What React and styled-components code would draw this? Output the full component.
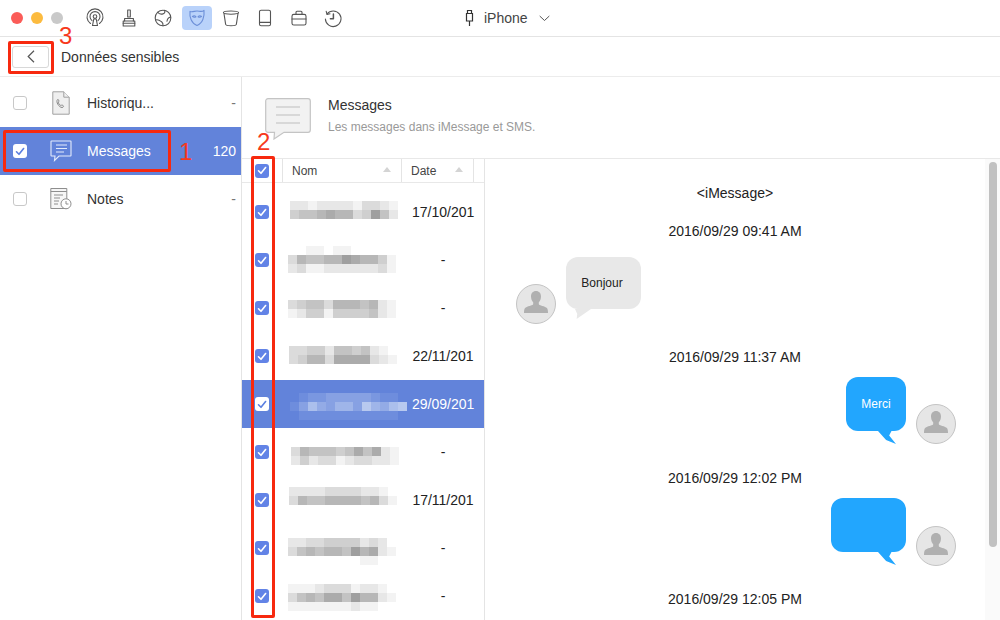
import React from "react";
import styled, { createGlobalStyle } from "styled-components";

const Global = createGlobalStyle`
  html, body { margin: 0; padding: 0; background: #fff; }
  body { font-family: "Liberation Sans", Arial, sans-serif; color: #222; }
`;

const Window = styled.div`
  position: relative;
  width: 1000px;
  height: 620px;
  overflow: hidden;
  background: #fff;
  display: flex;
  flex-direction: column;
`;

const Toolbar = styled.header`
  height: 36px;
  flex: none;
  display: flex;
  align-items: center;
  padding-left: 11px;
  border-bottom: 1px solid #e4e4e4;
`;
const Lights = styled.div`
  display: flex;
  gap: 8px;
  margin-right: 17px;
`;
const Light = styled.span`
  width: 12px;
  height: 12px;
  border-radius: 50%;
  background: ${p => p.$c};
`;
const Tools = styled.nav`
  display: flex;
  gap: 4px;
`;
const Tool = styled.div`
  width: 30px;
  height: 24px;
  border-radius: 4px;
  display: flex;
  align-items: center;
  justify-content: center;
  color: ${p => (p.$active ? "#6c8fd8" : "#555")};
  background: ${p => (p.$active ? "#b9d2fa" : "transparent")};
`;
const Device = styled.div`
  margin-left: 117px;
  display: flex;
  align-items: center;
  font-size: 14px;
  color: #444;
`;
const DeviceName = styled.span`
  margin: 0 11px 0 10px;
`;

const SubBar = styled.div`
  height: 39px;
  flex: none;
  display: flex;
  align-items: center;
  padding-left: 12px;
  border-bottom: 1px solid #ececec;
`;
const BackButton = styled.div`
  width: 35px;
  height: 20px;
  border: 1px solid #d8d8d8;
  border-radius: 3px;
  display: flex;
  align-items: center;
  justify-content: center;
  color: #555;
`;
const SubTitle = styled.div`
  margin-left: 12px;
  font-size: 14px;
  color: #333;
`;

const Body = styled.div`
  flex: 1;
  min-height: 0;
  display: flex;
`;
const Sidebar = styled.aside`
  width: 241px;
  flex: none;
  padding-top: 2px;
  border-right: 1px solid #e4e4e4;
`;
const SideRow = styled.div`
  height: 48px;
  display: grid;
  grid-template-columns: 37px 37px 1fr auto;
  align-items: center;
  padding: 0 5px 0 13px;
  background: ${p => (p.$active ? "#6283da" : "transparent")};
  color: ${p => (p.$active ? "#fff" : "#333")};
  font-size: 14px;
`;
const SideIcon = styled.div`
  display: flex;
  justify-content: center;
  width: 22px;
  color: ${p => (p.$active ? "#e4ebfb" : "#888")};
`;
const SideCount = styled.span`
  color: ${p => (p.$active ? "#fff" : "#777")};
`;
const Box = styled.span`
  width: 14px;
  height: 14px;
  box-sizing: border-box;
  border-radius: 3px;
  display: flex;
  align-items: center;
  justify-content: center;
  background: ${p => (p.$kind === "empty" || p.$kind === "white" ? "#fff" : "#6283e6")};
  border: ${p => (p.$kind === "empty" ? "1px solid #c8c8c8" : "none")};
  color: ${p => (p.$kind === "white" ? "#5b7fe0" : "#fff")};
`;

const Main = styled.main`
  flex: 1;
  min-width: 0;
  display: flex;
  flex-direction: column;
`;
const MainHead = styled.div`
  height: 82px;
  flex: none;
  box-sizing: border-box;
  padding: 19px 0 0 23px;
  display: flex;
  border-bottom: 1px solid #e8e8e8;
`;
const HeadText = styled.div`
  margin-left: 17px;
`;
const HeadTitle = styled.div`
  font-size: 14px;
  line-height: 18px;
  color: #333;
`;
const HeadSub = styled.div`
  margin-top: 6px;
  font-size: 12px;
  line-height: 15px;
  color: #999;
`;
const BigMsgSvg = styled.svg`
  display: block;
  margin-top: 2px;
`;

const Split = styled.div`
  flex: 1;
  min-height: 0;
  display: flex;
`;
const ListPane = styled.section`
  width: 243px;
  flex: none;
  box-sizing: border-box;
  border-right: 1px solid #e4e4e4;
`;
const ListHead = styled.div`
  height: 24px;
  box-sizing: border-box;
  display: grid;
  grid-template-columns: 40px 120px 72px;
  align-items: stretch;
  border-bottom: 1px solid #e8e8e8;
  margin-bottom: 5px;
  font-size: 12px;
  color: #444;
`;
const HeadCell = styled.div`
  display: flex;
  align-items: center;
  justify-content: space-between;
  padding: 0 10px 0 9px;
  border-right: 1px solid #e4e4e4;
  border-left: ${p => (p.$first ? "1px solid #e4e4e4" : "none")};
`;
const BoxCell = styled.div`
  display: flex;
  align-items: center;
  padding-left: 13px;
`;
const SortMark = styled.i`
  width: 0;
  height: 0;
  border-left: 4px solid transparent;
  border-right: 4px solid transparent;
  border-bottom: 5px solid #d4d4d4;
  margin-top: -3px;
`;
const ListRow = styled.div`
  height: 48px;
  display: grid;
  grid-template-columns: 40px 130px 62px;
  align-items: center;
  background: ${p => (p.$active ? "#6283da" : "transparent")};
  color: ${p => (p.$active ? "#fff" : "#222")};
  font-size: 14px;
`;
const DateCell = styled.div`
  text-align: center;
  white-space: nowrap;
`;
const MosaicSvg = styled.svg`
  display: block;
  filter: blur(0.7px);
`;

const Thread = styled.section`
  flex: 1;
  min-width: 0;
  display: flex;
  flex-direction: column;
  align-items: stretch;
`;
const ThreadTitle = styled.div`
  margin-top: 25px;
  line-height: 18px;
  font-size: 14px;
  text-align: center;
  color: #222;
`;
const Stamp = styled.div`
  margin-top: ${p => p.$top}px;
  line-height: 18px;
  font-size: 14px;
  text-align: center;
  color: #222;
`;
const MsgRow = styled.div`
  margin-top: ${p => p.$top}px;
  height: ${p => p.$h}px;
  display: flex;
  gap: 10px;
  justify-content: ${p => (p.$me ? "flex-end" : "flex-start")};
  padding: ${p => (p.$me ? "0 29px 0 0" : "0 0 0 31px")};
`;
const Avatar = styled.div`
  width: 40px;
  height: 40px;
  box-sizing: border-box;
  align-self: flex-end;
  border-radius: 50%;
  background: #e6e6e6;
  border: 1px solid #c4c4c4;
  display: flex;
  align-items: center;
  justify-content: center;
  overflow: hidden;
  color: #b0b0b0;
`;
const Bubble = styled.div`
  position: relative;
  box-sizing: border-box;
  width: ${p => p.$w}px;
  height: ${p => (p.$me ? 54 : 52)}px;
  border-radius: 12px;
  font-size: 12px;
  display: flex;
  align-items: center;
  justify-content: center;
  padding-right: ${p => (p.$me ? 0 : 3)}px;
  background: ${p => (p.$me ? "#22a6fe" : "#e8e8e8")};
  color: ${p => (p.$me ? "#fff" : "#222")};
  &::after {
    content: "";
    position: absolute;
    top: 100%;
    background: inherit;
    ${p =>
      p.$me
        ? `right: 10px; width: 18px; height: 13px; clip-path: polygon(0 0, 75% 0, 62% 35%, 100% 100%, 45% 70%);`
        : `left: 9px; width: 16px; height: 10px; clip-path: polygon(0 0, 100% 0, 10% 100%, 14% 50%);`}
  }
`;
const ScrollTrack = styled.div`
  width: 15px;
  flex: none;
  background: #fafafa;
  padding: 3px 3px 0 4px;
  box-sizing: border-box;
`;
const ScrollThumb = styled.div`
  width: 8px;
  height: 385px;
  border-radius: 4px;
  background: #c1c1c1;
`;

const Mark = styled.div`
  position: absolute;
  left: ${p => p.$x}px;
  top: ${p => p.$y}px;
  width: ${p => p.$w}px;
  height: ${p => p.$h}px;
  box-sizing: border-box;
  border: 3px solid #f7290f;
  border-radius: 2px;
  pointer-events: none;
`;
const MarkNumber = styled.div`
  position: absolute;
  left: ${p => p.$x}px;
  top: ${p => p.$y}px;
  font-size: 24px;
  line-height: 25px;
  color: #f7391c;
`;

const Check = () => (
  <svg width="10" height="9" viewBox="0 0 10 9" fill="none" stroke="currentColor" strokeWidth="1.6" strokeLinecap="round" strokeLinejoin="round">
    <path d="M1.5 4.8 4 7.3 8.6 1.5" />
  </svg>
);

const Ic = ({ children }) => (
  <svg width="20" height="20" viewBox="0 0 20 20" fill="none" stroke="currentColor" strokeWidth="1.1" strokeLinecap="round" strokeLinejoin="round">
    {children}
  </svg>
);

const toolIcons = [
  <Ic key="a">
    <path d="M5.5 15.5a8 8 0 1 1 9 0" />
    <path d="M7 12.6a5 5 0 1 1 6 0" />
    <circle cx="10" cy="8.6" r="1.8" />
    <path d="M8.8 11h2.4l1.3 6.5h-5z" />
  </Ic>,
  <Ic key="b">
    <path d="M8.7 2h2.600v7H8.700z" />
    <path d="M5.600 13V10.500h8.800V13" />
    <path d="M4.200 13h11.600v5H4.200z" />
    <path d="M4.200 15.300h11.600" />
  </Ic>,
  <Ic key="c">
    <circle cx="10" cy="10" r="7.800" />
    <path d="M4.800 4.300c1.400 2.300 3.200 2 5.200 1.600 1.800-.4 2.200-2 1.600-3.600" />
    <path d="M2.600 12c2.600-1 4.200.4 6 1.800 1.600 1.200 1.600 2.600 1.400 4" />
    <path d="M17.700 9c-2 .4-3.400 1.600-3.700 4.200" />
  </Ic>,
  <Ic key="d">
    <path d="M3 3.400C5 4.400 7.500 3 10 3s5 1.400 7-.6c.7 6.400-1.400 13-7 15-5.600-2-7.700-8.600-7-14z" />
    <path d="M5.400 8.400c1.200-.9 2.600-.8 3.600.4-1.200.7-2.600.6-3.600-.4zM14.600 8.400c-1.200-.9-2.600-.8-3.600.4 1.200.7 2.600.6 3.600-.4z" />
  </Ic>,
  <Ic key="e">
    <ellipse cx="10" cy="4.600" rx="7.600" ry="1.600" />
    <path d="M3 5.500l1.600 10.700c.2 2 10.600 2 10.800 0L17 5.500" />
  </Ic>,
  <Ic key="f">
    <rect x="4.500" y="2.200" width="11" height="15.600" rx="1.600" />
    <path d="M4.500 14.400h11" />
  </Ic>,
  <Ic key="g">
    <rect x="3" y="6.400" width="14" height="10.600" rx="1.800" />
    <path d="M7 6.400V4.200c0-.6.400-1 1-1h4c.6 0 1 .4 1 1v2.200" />
    <path d="M3 11h14" />
  </Ic>,
  <Ic key="h">
    <path d="M4 6a7.800 7.800 0 1 1-1.600 5" />
    <path d="M3.200 3.400 4 6.400l3-.6" />
    <path d="M10.400 6v4.800H7.400" strokeWidth="1.500" />
  </Ic>,
];

const PhoneDoc = () => (
  <svg width="18" height="24" viewBox="0 0 18 24" fill="#efefef" stroke="#a0a0a0" strokeWidth="1">
    <path d="M.8.800h11l5.400 5.400v17h-16.400z" />
    <path d="M11.800.800v5.400h5.400" />
    <path d="M5.600 8.500c1-.6 1.600 1.600 1 2.400-.6.900.8 3.200 1.800 3.400 1 .2 1.600-.6 2.400 0 1.200 1 .6 2.200-.8 2.200-3 0-6.600-5.800-4.400-8z" fill="none" stroke="#888" />
  </svg>
);
const MsgSide = () => (
  <svg width="22" height="22" viewBox="0 0 22 22" fill="none" stroke="currentColor" strokeWidth="1.100">
    <path d="M1.500 1h19c.3 0 .5.200.5.500v14c0 .3-.2.500-.5.500H9l-4.500 4.500.5-4.500H1.500c-.3 0-.5-.2-.5-.5v-14c0-.3.200-.5.500-.5z" />
    <path d="M6 5h11M6 8.500h11M6 12h8" />
  </svg>
);
const NoteSide = () => (
  <svg width="22" height="22" viewBox="0 0 22 22" fill="#f6f6f6" stroke="#8e8e8e" strokeWidth="1">
    <path d="M.8.500h16v20H.8zM.8 3.500h16" />
    <path d="M4 7h9M4 10h6M4 13h5M4 16h4" />
    <circle cx="16" cy="15.800" r="5" fill="#fff" />
    <path d="M16 13v3h2.500" fill="none" />
  </svg>
);
const BigMsg = () => (
  <BigMsgSvg width="46" height="42" viewBox="0 0 46 42" fill="#f2f2f2" stroke="#c4c4c4" strokeWidth="1.200">
    <path d="M3 .7h40c1.300 0 2.300 1 2.300 2.300v29c0 1.300-1 2.300-2.300 2.300H19L9 41l.5-6.700H3c-1.300 0-2.300-1-2.300-2.300V3C.7 1.700 1.700.7 3 .7z" />
    <path d="M11 9h24M11 17h24M11 25h24" stroke="#cfcfcf" strokeWidth="1.500" />
  </BigMsgSvg>
);
const Person = () => (
  <svg width="30" height="30" viewBox="0 0 30 30" fill="currentColor">
    <path d="M15 2c3.200 0 5 2.400 5 5.400 0 2.400-1 4.700-2.200 5.800v2c0 1.300 6.700 1.800 8.300 4 .6.900.9 2.400.9 4.800H3c0-2.400.3-3.900.9-4.800 1.600-2.200 8.300-2.700 8.300-4v-2C11 12.100 10 9.800 10 7.400 10 4.400 11.800 2 15 2z" />
  </svg>
);

/* Blurred contact names: each string is a strip of the mosaic, one digit per cell */
const shade = (d, active) => {
  const n = parseInt(d, 10);
  if (active) {
    const a = n / 9;
    return `rgb(${Math.round(98 + a * 110)},${Math.round(131 + a * 90)},${Math.round(218 + a * 27)})`;
  }
  const v = Math.round(255 - n * 12);
  return `rgb(${v},${v},${v})`;
};
const CELL = 9;
const Mosaic = ({ x, top, strips, active }) => (
  <MosaicSvg width="130" height="48" viewBox="0 0 130 48">
    {strips.map((s, r) =>
      [...s].map((d, c) =>
        d === "0" ? null : (
          <rect key={`${r}-${c}`} x={x + c * CELL} y={top + r * CELL} width={CELL} height={CELL} fill={shade(d, active)} />
        )
      )
    )}
  </MosaicSvg>
);

const rows = [
  { x: 8, top: 13, date: "17/10/201", strips: ["221222213321", "455676634852"] },
  { x: 6, top: 10, date: "-", strips: ["001101100000", "365566876641", "231122222231"] },
  { x: 6, top: 16, date: "-", strips: ["345536665621", "124414444521"] },
  { x: 7, top: 14, date: "22/11/201", strips: ["334425545210", "346637777321"] },
  { x: 8, top: 13, date: "29/09/201", active: true, strips: ["0122333332110", "1364355375467", "0111111111110"] },
  { x: 9, top: 19, date: "-", strips: ["365554575721", "242331233221"] },
  { x: 7, top: 11, date: "17/11/201", strips: ["222233332210", "365566665631"] },
  { x: 6, top: 14, date: "-", strips: ["223344442320", "356566586721", "000000001100"] },
  { x: 6, top: 12, date: "-", strips: ["111233312210", "356577586621", "111111121100"] },
];

export default function App() {
  return (
    <Window>
      <Global />
      <Toolbar>
        <Lights>
          <Light $c="#fb5c58" />
          <Light $c="#fcbb3f" />
          <Light $c="#c9c9c9" />
        </Lights>
        <Tools>
          {toolIcons.map((icon, i) => (
            <Tool key={i} $active={i === 3}>{icon}</Tool>
          ))}
        </Tools>
        <Device>
          <svg width="9" height="18" viewBox="0 0 9 18" fill="none" stroke="#333" strokeWidth="1.200">
            <path d="M2.500 1.500h4v3h-4zM1.500 4.500h6v7.500h-6zM4.500 12v5" />
          </svg>
          <DeviceName>iPhone</DeviceName>
          <svg width="11" height="7" viewBox="0 0 11 7" fill="none" stroke="#555" strokeWidth="1">
            <path d="M.7 1 5.500 5.500 10.300 1" />
          </svg>
        </Device>
      </Toolbar>

      <SubBar>
        <BackButton>
          <svg width="8" height="13" viewBox="0 0 8 13" fill="none" stroke="currentColor" strokeWidth="1.200">
            <path d="M7 .8 1.200 6.500 7 12.200" />
          </svg>
        </BackButton>
        <SubTitle>Données sensibles</SubTitle>
      </SubBar>

      <Body>
        <Sidebar>
          <SideRow>
            <Box $kind="empty" />
            <SideIcon><PhoneDoc /></SideIcon>
            <span>Historiqu...</span>
            <SideCount>-</SideCount>
          </SideRow>
          <SideRow $active>
            <Box $kind="white"><Check /></Box>
            <SideIcon $active><MsgSide /></SideIcon>
            <span>Messages</span>
            <SideCount $active>120</SideCount>
          </SideRow>
          <SideRow>
            <Box $kind="empty" />
            <SideIcon><NoteSide /></SideIcon>
            <span>Notes</span>
            <SideCount>-</SideCount>
          </SideRow>
        </Sidebar>

        <Main>
          <MainHead>
            <BigMsg />
            <HeadText>
              <HeadTitle>Messages</HeadTitle>
              <HeadSub>Les messages dans iMessage et SMS.</HeadSub>
            </HeadText>
          </MainHead>

          <Split>
            <ListPane>
              <ListHead>
                <BoxCell><Box><Check /></Box></BoxCell>
                <HeadCell $first>Nom<SortMark /></HeadCell>
                <HeadCell>Date<SortMark /></HeadCell>
              </ListHead>
              {rows.map((r, i) => (
                <ListRow key={i} $active={r.active}>
                  <BoxCell><Box $kind={r.active ? "white" : undefined}><Check /></Box></BoxCell>
                  <Mosaic x={r.x} top={r.top} strips={r.strips} active={r.active} />
                  <DateCell>{r.date}</DateCell>
                </ListRow>
              ))}
            </ListPane>

            <Thread>
              <ThreadTitle>&lt;iMessage&gt;</ThreadTitle>
              <Stamp $top={20}>2016/09/29 09:41 AM</Stamp>
              <MsgRow $top={17} $h={67}>
                <Avatar><Person /></Avatar>
                <Bubble $w={75}>Bonjour</Bubble>
              </MsgRow>
              <Stamp $top={24}>2016/09/29 11:37 AM</Stamp>
              <MsgRow $me $top={11} $h={67}>
                <Bubble $me $w={60}>Merci</Bubble>
                <Avatar><Person /></Avatar>
              </MsgRow>
              <Stamp $top={25}>2016/09/29 12:02 PM</Stamp>
              <MsgRow $me $top={11} $h={68}>
                <Bubble $me $w={75} />
                <Avatar><Person /></Avatar>
              </MsgRow>
              <Stamp $top={24}>2016/09/29 12:05 PM</Stamp>
            </Thread>
            <ScrollTrack><ScrollThumb /></ScrollTrack>
          </Split>
        </Main>
      </Body>

      <Mark $x={8} $y={41} $w={46} $h={33} />
      <MarkNumber $x={59} $y={23}>3</MarkNumber>
      <Mark $x={3} $y={130} $w={168} $h={42} />
      <MarkNumber $x={179} $y={139}>1</MarkNumber>
      <Mark $x={251} $y={156} $w={24} $h={462} />
      <MarkNumber $x={257} $y={129}>2</MarkNumber>
    </Window>
  );
}
